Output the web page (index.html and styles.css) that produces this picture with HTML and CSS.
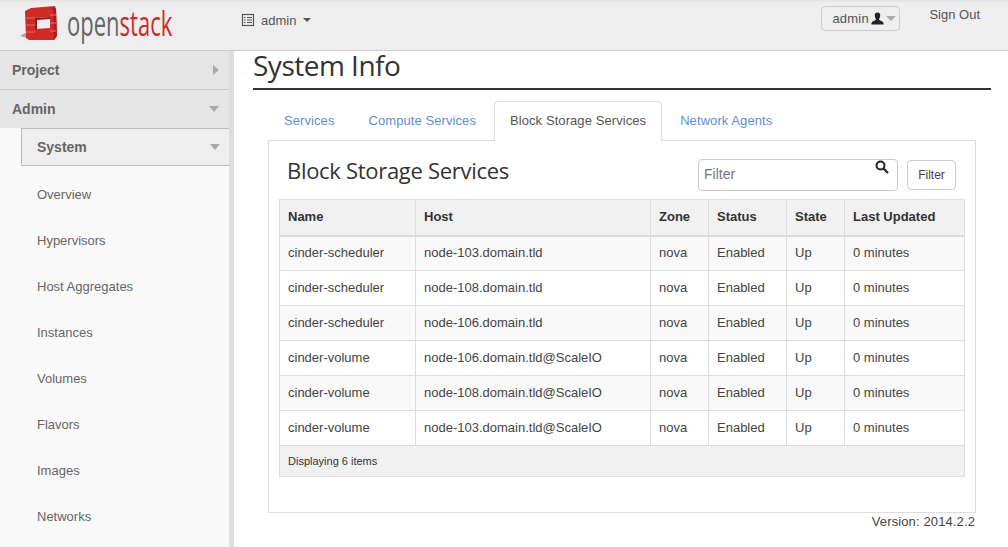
FILE: index.html
```html
<!DOCTYPE html>
<html>
<head>
<link rel="stylesheet" href="styles.css">
</head>
<body>

<header class="topbar">
  <a class="brand">
    <svg class="logo" width="38" height="36" viewBox="0 0 38 36">
      <path d="M0 31 L5 28 L7 33 Z" fill="#a5a5a5"/>
      <path d="M5 6 L11 3 L35 1 L36 4 L37 31 L34 35 L9 35 L6 33 Z" fill="#cf2a27"/>
      <path d="M33 2 L36 4 L37 31 L34 35 Z" fill="#a81f1c"/>
      <path d="M15 13 L30 12 L30 23 L15 24 Z" fill="#eeeeee"/>
      <path d="M15 13 L30 12 L30 14 L17 15 L17 24 L15 24 Z" fill="#8f1a18"/>
      <path d="M6 13 H15 M6 20 H15 M6 27 H15 M30 10 H36 M30 18 H36 M30 26 H36" stroke="#e2706c" stroke-width="1"/>
    </svg>
    <span class="wordmark">open<span class="wordmark-red">stack</span></span>
  </a>
  <div class="project-picker">
    <svg width="14" height="14" viewBox="0 0 14 14">
      <rect x="1.5" y="1.5" width="11" height="11" fill="none" stroke="#555" stroke-width="1.2"/>
      <path d="M3 4.5H4.5M6 4.5H11M3 7H4.5M6 7H11M3 9.5H4.5M6 9.5H11" stroke="#555" stroke-width="1"/>
    </svg>
    <span>admin</span>
    <span class="caret"></span>
  </div>
  <div class="user-menu">
    <div class="user-button">
      admin
      <svg width="13" height="13" viewBox="0 0 13 13">
        <path d="M6.5 0.5C8.6 0.5 9.4 2.2 9.2 4C9 5.6 8.3 6.6 8 7.4C8.6 8.6 12.4 9 12.6 11.6V12.5H0.4V11.6C0.6 9 4.4 8.6 5 7.4C4.7 6.6 4 5.6 3.8 4C3.6 2.2 4.4 0.5 6.5 0.5Z" fill="#222"/>
      </svg>
      <span class="caret caret-light"></span>
    </div>
    <a class="sign-out">Sign Out</a>
  </div>
</header>

<div class="page">
  <nav class="sidebar">
    <div class="nav-head">Project <span class="arrow-right"></span></div>
    <div class="nav-head">Admin <span class="arrow-down"></span></div>
    <div class="nav-sub-wrap">
      <div class="nav-sub">System <span class="arrow-down"></span></div>
      <a class="nav-item">Overview</a>
      <a class="nav-item">Hypervisors</a>
      <a class="nav-item">Host Aggregates</a>
      <a class="nav-item">Instances</a>
      <a class="nav-item">Volumes</a>
      <a class="nav-item">Flavors</a>
      <a class="nav-item">Images</a>
      <a class="nav-item">Networks</a>
    </div>
  </nav>

  <main class="content">
    <h1 class="page-title">System Info</h1>

    <ul class="tabs">
      <li><a>Services</a></li>
      <li><a>Compute Services</a></li>
      <li class="active"><a>Block Storage Services</a></li>
      <li><a>Network Agents</a></li>
    </ul>

    <div class="tab-box">
      <div class="table-head">
        <h3>Block Storage Services</h3>
        <div class="filter">
          <div class="filter-input">
            <span>Filter</span>
            <svg width="14" height="14" viewBox="0 0 14 14">
              <circle cx="5.5" cy="5.5" r="4" fill="none" stroke="#222" stroke-width="2"/>
              <path d="M8.5 8.5L13 13" stroke="#222" stroke-width="2.2"/>
            </svg>
          </div>
          <button class="filter-btn">Filter</button>
        </div>
      </div>

      <table class="services">
        <colgroup>
          <col class="c-name"><col class="c-host"><col class="c-zone"><col class="c-status"><col class="c-state"><col>
        </colgroup>
        <thead>
          <tr><th>Name</th><th>Host</th><th>Zone</th><th>Status</th><th>State</th><th>Last Updated</th></tr>
        </thead>
        <tbody>
          <tr><td>cinder-scheduler</td><td>node-103.domain.tld</td><td>nova</td><td>Enabled</td><td>Up</td><td>0 minutes</td></tr>
          <tr><td>cinder-scheduler</td><td>node-108.domain.tld</td><td>nova</td><td>Enabled</td><td>Up</td><td>0 minutes</td></tr>
          <tr><td>cinder-scheduler</td><td>node-106.domain.tld</td><td>nova</td><td>Enabled</td><td>Up</td><td>0 minutes</td></tr>
          <tr><td>cinder-volume</td><td>node-106.domain.tld@ScaleIO</td><td>nova</td><td>Enabled</td><td>Up</td><td>0 minutes</td></tr>
          <tr><td>cinder-volume</td><td>node-108.domain.tld@ScaleIO</td><td>nova</td><td>Enabled</td><td>Up</td><td>0 minutes</td></tr>
          <tr><td>cinder-volume</td><td>node-103.domain.tld@ScaleIO</td><td>nova</td><td>Enabled</td><td>Up</td><td>0 minutes</td></tr>
        </tbody>
        <tfoot>
          <tr><td colspan="6">Displaying 6 items</td></tr>
        </tfoot>
      </table>
    </div>

    <div class="version">Version: 2014.2.2</div>
  </main>
</div>

</body>
</html>
```

FILE: styles.css
```css
* {
  box-sizing: border-box;
}

html,
body {
  height: 547px;
  margin: 0;
  overflow: hidden;
}

body {
  font-family: "Liberation Sans", Arial, sans-serif;
  font-size: 13px;
  color: #444;
  background-color: #fff;
}

/* top bar */
.topbar {
  display: flex;
  height: 51px;
  background-color: #eee;
  border-bottom: 1px solid #ccc;
  box-shadow: inset 0 3px 3px -2px #ddd;
}

.brand {
  display: flex;
  align-items: flex-start;
  width: 241px;
  padding: 5px 0 0 20px;
}

.logo {
  flex: none;
}

.wordmark {
  margin: -2px 0 0 9px;
  font-family: "Open Sans", sans-serif;
  font-size: 31px;
  line-height: 40px;
  color: #666;
  transform: scale(.71, 1.1);
  transform-origin: left center;
}

.wordmark-red {
  color: #cf2a27;
}

.project-picker {
  display: flex;
  align-items: center;
  gap: 6px;
  height: 40px;
  color: #555;
}

.caret {
  display: inline-block;
  border-top: 4px solid #555;
  border-left: 4px solid transparent;
  border-right: 4px solid transparent;
  margin-left: 1px;
}

.caret-light {
  border-top: 5px solid #aaa;
  border-left: 5px solid transparent;
  border-right: 5px solid transparent;
  margin-left: 0;
}

.user-menu {
  display: flex;
  align-items: flex-start;
  margin-left: auto;
  padding: 6px 28px 0 0;
}

.user-button {
  display: flex;
  align-items: center;
  gap: 2px;
  width: 79px;
  height: 25px;
  padding-left: 10px;
  color: #555;
  letter-spacing: .2px;
  border: 1px solid #ccc;
  border-radius: 4px;
  background-color: #eee;
}

.sign-out {
  margin: 1px 0 0 29px;
  line-height: 16px;
  color: #555;
}

/* sidebar */
.page {
  display: flex;
  height: 496px;
}

.sidebar {
  flex: none;
  width: 234px;
  background-color: #f9f9f9;
  border-right: 5px solid #ddd;
  overflow: hidden;
}

.nav-head {
  display: flex;
  align-items: center;
  justify-content: space-between;
  height: 39px;
  padding: 0 10px 0 12px;
  font-size: 14px;
  font-weight: bold;
  color: #666;
  background-color: #e5e5e5;
  border-bottom: 1px solid #ccc;
}

.nav-head:nth-child(2) {
  height: 38px;
  border-bottom: 0;
}

.arrow-right {
  border-left: 6px solid #aaa;
  border-top: 5px solid transparent;
  border-bottom: 5px solid transparent;
}

.arrow-down {
  border-top: 6px solid #aaa;
  border-left: 5px solid transparent;
  border-right: 5px solid transparent;
}

.nav-sub-wrap {
  padding-left: 21px;
}

.nav-sub {
  display: flex;
  align-items: center;
  justify-content: space-between;
  height: 38px;
  margin-bottom: 5px;
  padding: 0 9px 0 15px;
  font-size: 14px;
  font-weight: bold;
  color: #666;
  background-color: #eee;
  border: 1px solid #bbb;
  border-right: 0;
}

.nav-item {
  display: flex;
  align-items: center;
  height: 46px;
  padding-left: 16px;
  color: #666;
}

/* main area */
.content {
  flex: 1;
  padding: 0 18px 0 19px;
}

.page-title {
  margin: 0;
  height: 39px;
  font-family: "Open Sans", sans-serif;
  font-size: 28px;
  font-weight: normal;
  letter-spacing: -.5px;
  line-height: 29px;
  color: #333;
  border-bottom: 2px solid #333;
}

.tabs {
  display: flex;
  list-style: none;
  margin: 11px 0 0 15px;
  padding: 0;
  height: 40px;
}

.tabs li a {
  display: block;
  height: 40px;
  padding: 0 16px;
  line-height: 40px;
  letter-spacing: .08px;
  color: #5b8fd6;
}

.tabs li + li {
  margin-left: 2px;
}

.tabs .active {
  position: relative;
  z-index: 1;
  background-color: #fff;
  border: 1px solid #ddd;
  border-bottom: 0;
  border-radius: 4px 4px 0 0;
}

.tabs .active a {
  padding: 0 15px;
  line-height: 38px;
  color: #555;
}

.tab-box {
  margin: -1px 15px 0 15px;
  height: 373px;
  padding: 0 10px;
  border: 1px solid #ddd;
}

.table-head {
  display: flex;
  justify-content: space-between;
  height: 58px;
}

.table-head h3 {
  margin: 13px 0 0 8px;
  font-family: "Open Sans", sans-serif;
  font-size: 22px;
  font-weight: normal;
  letter-spacing: -.3px;
  line-height: 32px;
  color: #333;
}

.filter {
  display: flex;
  align-items: flex-start;
  padding: 18px 9px 0 0;
}

.filter-input {
  display: flex;
  justify-content: space-between;
  width: 200px;
  height: 32px;
  padding: 0 8px 0 5px;
  font-size: 14px;
  line-height: 28px;
  color: #777;
  border: 1px solid #ccc;
  border-radius: 4px;
}

.filter-btn {
  width: 49px;
  height: 30px;
  margin: 1px 0 0 9px;
  padding: 0;
  font: 12px "Liberation Sans", sans-serif;
  color: #444;
  background-color: #fff;
  border: 1px solid #ccc;
  border-radius: 4px;
}

/* table */
.services {
  width: 686px;
  table-layout: fixed;
  border-collapse: collapse;
  border: 1px solid #ddd;
}

.c-name { width: 136px; }
.c-host { width: 235px; }
.c-zone { width: 58px; }
.c-status { width: 78px; }
.c-state { width: 58px; }

.services th,
.services td {
  padding: 0 8px 1px;
  text-align: left;
  border: 1px solid #ddd;
}

.services th {
  height: 36px;
  color: #333;
  background-color: #f1f1f1;
  border-bottom-width: 2px;
}

.services tbody td {
  height: 35px;
  color: #444;
}

.services tbody tr:nth-child(odd) td {
  background-color: #f9f9f9;
}

.services tfoot td {
  height: 31px;
  font-size: 11px;
  color: #333;
  background-color: #f1f1f1;
}

.version {
  margin: 0 16px 0 0;
  padding-top: 1px;
  text-align: right;
  letter-spacing: .12px;
  line-height: 16px;
  color: #444;
}
```
